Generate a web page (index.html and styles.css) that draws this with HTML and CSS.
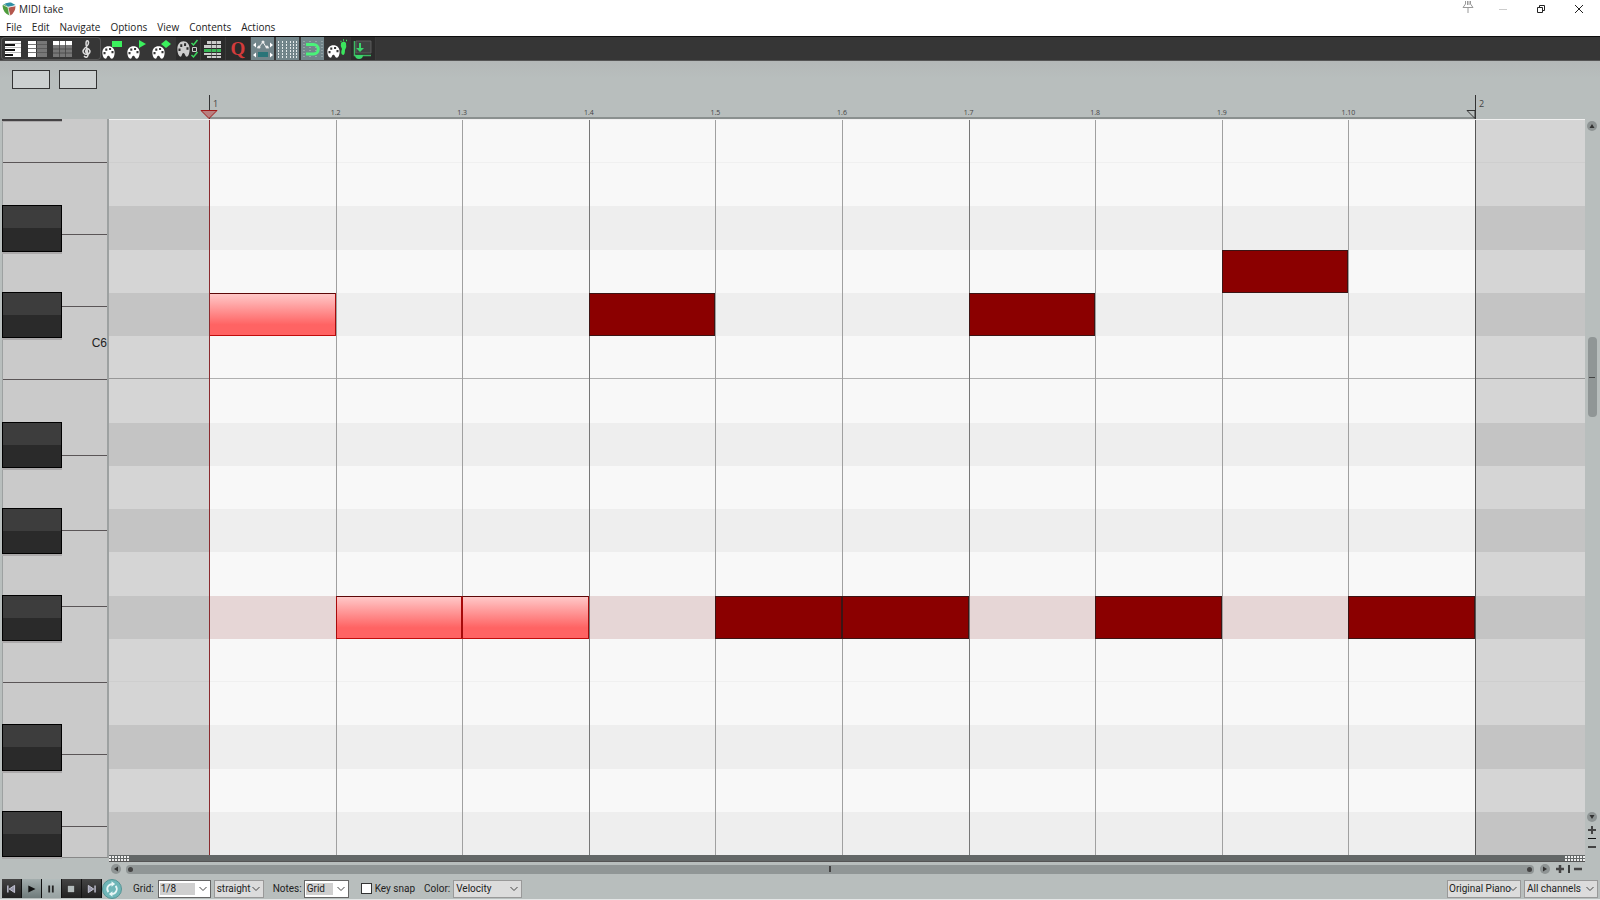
FILE: index.html
```html
<!DOCTYPE html>
<html lang="en">
<head>
<meta charset="utf-8">
<title>MIDI take</title>
<link rel="stylesheet" href="styles.css">
</head>
<body>
<svg class="defs" aria-hidden="true">
  <symbol id="palette" viewBox="0 0 14 13" preserveAspectRatio="none"><path fill-rule="evenodd" d="M7 .3C3 .3 .4 3 .4 6.500C.4 10 2 12.700 4 12.700C5.500 12.700 5 10 6.800 9.800C8.800 9.700 8.500 12.700 10.500 12.700C12.500 12.700 13.600 9.500 13.600 6.500C13.600 3 11 .3 7 .3ZM1.600 6h2.200v2.200H1.600ZM3.500 2.600h2.200v2.200H3.500ZM7.600 1.900h2.200v2.200H7.600ZM10.200 5h2.200v2.200h-2.200Z"/></symbol>
  <symbol id="chev" viewBox="0 0 8 6"><path d="M0.500 1l3.500 3.500L7.500 1" fill="none" stroke="#444" stroke-width="1"/></symbol>
</svg>
<div class="app">
  <header class="titlebar">
    <svg class="logo" viewBox="0 0 14 14"><path d="M0.500 3.500Q2 2 4 3l3 3 .5 7.500Q1 11 .5 3.500z" fill="#4d9b3c"/><path d="M1 3Q4 0 9 .6l4.500 2.400-4 1.500L6 5 3.500 2.500z" fill="#2f8fa3"/><path d="M6.500 5.500l7-1.500Q13.500 10 8.500 13.500L7 9z" fill="#b4574d"/><path d="M1.500 3.200l4.500 2 1.500 8M6 5.200l7.500-1.500" stroke="#eee" fill="none" stroke-width=".8"/></svg>
    <h1 class="title">MIDI take</h1>
    <div class="winbtns">
      <button class="winbtn pin" aria-label="Pin"><svg width="12" height="12" viewBox="0 0 12 12"><path d="M3.500 0v3L1 6.500h10L8.500 3V0M5.500 0v4M7 0v4M6 7v5" fill="none" stroke="#999"/></svg></button>
      <button class="winbtn" aria-label="Minimize"><svg width="10" height="10" viewBox="0 0 10 10"><path d="M1 5.500h8" stroke="#ccc"/></svg></button>
      <button class="winbtn" aria-label="Restore"><svg width="10" height="10" viewBox="0 0 10 10"><path d="M1.500 3.500h5v5h-5zM3.500 3V1.500h5v5H7" fill="none" stroke="#222"/></svg></button>
      <button class="winbtn" aria-label="Close"><svg width="10" height="10" viewBox="0 0 10 10"><path d="M1 1l8 8M9 1L1 9" stroke="#222"/></svg></button>
    </div>
  </header>
  <nav class="menu">
    <button>File</button><button>Edit</button><button>Navigate</button><button>Options</button><button>View</button><button>Contents</button><button>Actions</button>
  </nav>
  <div class="toolbar">
    <div class="toolgroup">
      <button class="tool" aria-label="Piano roll"><svg viewBox="0 0 24 24"><path d="M4 4h16v16H4z" fill="#fff"/><path d="M4 8h10M4 13h10M4 18h8" stroke="#111" stroke-width="2"/><path d="M4 6.500h16M4 10.500h16M4 15.500h16" stroke="#888" stroke-width=".6"/></svg></button>
      <button class="tool" aria-label="Named notes"><svg viewBox="0 0 24 24"><path d="M2 4h8v16H2z" fill="#fff"/><path d="M11 4h10v16H11z" fill="#777"/><path d="M2 7.500h19M2 11.500h19M2 15.500h19" stroke="#555" stroke-width=".8"/></svg></button>
      <button class="tool" aria-label="Event list"><svg viewBox="0 0 24 24"><path d="M2 8h19v12H2z" fill="#777"/><path d="M2 4h19v4H2z" fill="#fff"/><path d="M8.500 4v16M14.500 4v16M2 12h19M2 16h19" stroke="#444" stroke-width=".8"/></svg></button>
      <button class="tool" aria-label="Notation"><svg viewBox="0 0 24 24"><path d="M8 19q3 3 4-1L10 7q0-4 2-3 2 3-3 7-4 4 0 6 5 1 5-3-2-4-4-1-1 2 1 3" fill="none" stroke="#ddd" stroke-width="1.500"/></svg></button>
    </div>
    <button class="tool" aria-label="Color by velocity"><svg viewBox="0 0 24 24"><use href="#palette" x="1" y="9" width="13" height="13" fill="#fff"/><path d="M11 4h10v6H11z" fill="#3bf05d"/></svg></button>
    <button class="tool" aria-label="Color by channel"><svg viewBox="0 0 24 24"><use href="#palette" x="1" y="9" width="13" height="13" fill="#fff"/><path d="M13 3l7 4-7 4z" fill="#3bf05d"/></svg></button>
    <button class="tool" aria-label="Color by pitch"><svg viewBox="0 0 24 24"><use href="#palette" x="1" y="9" width="13" height="13" fill="#fff"/><path d="M10 7l5-4 5 4-5 4z" fill="#3bf05d"/></svg></button>
    <button class="tool dark" aria-label="Color options"><svg viewBox="0 0 24 24"><use href="#palette" x="1" y="4" width="13" height="16" fill="#ccc"/><path d="M16.500 10.500h4v4h-4z" stroke="#ccc" fill="none"/><path d="M15.500 6l2 2 4-5M15.500 18l2 2 4-5" stroke="#3bd65d" fill="none" stroke-width="1.500"/></svg></button>
    <button class="tool dark" aria-label="Note rows"><svg viewBox="0 0 24 24"><path d="M6 4h14v3H6zM3 8h17v3H3zM3 16h17v2H3zM6 19h14v2H6z" fill="#ccc"/><path d="M3 12h17v3H3z" fill="#39b957"/><path d="M10.500 4v17M15.500 4v17" stroke="#444" stroke-width=".7"/></svg></button>
    <button class="tool dark quant" aria-label="Quantize">Q</button>
    <button class="tool on" aria-label="Envelope"><svg viewBox="0 0 24 24"><path d="M6 11l2-1 4-5 3 5 3 1" stroke="#eee" fill="none"/><path d="M2 8l3-2.500v5zM22 8l-3-2.500v5zM2 18l3-2.500v5zM22 18l-3-2.500v5z" fill="#fff"/><circle cx="12" cy="5" r="1.500" fill="#eee"/><circle cx="8" cy="10" r="1.500" fill="#eee"/><circle cx="16" cy="10" r="1.500" fill="#eee"/><path d="M7 15h10v5H7z" fill="#2a7478"/></svg></button>
    <button class="tool on" aria-label="Grid"><svg viewBox="0 0 24 24"><path d="M2.500 4v17M6.500 4v17M10.500 4v17M14.500 4v17M17.500 4v17M20.500 4v17" stroke="#e4eaea" stroke-dasharray="2 1"/></svg></button>
    <button class="tool on" aria-label="Snap"><svg viewBox="0 0 24 24"><path d="M3 4v17M9 4v17M15 4v17M21 4v17" stroke="#b8c4c4" stroke-dasharray="1 2"/><path d="M5 7.500h7.500a4.500 4.500 0 0 1 0 9.500H5" stroke="#4bf27a" stroke-width="3" fill="none"/></svg></button>
    <button class="tool" aria-label="Step input"><svg viewBox="0 0 24 24"><use href="#palette" x="1" y="8" width="13" height="13" fill="#fff"/><path d="M15 6q3-3 5 0 1 4-1 7 0 5-2 5-3-1-1-6-2-3-1-6z" fill="#3be65d"/><path d="M14.500 4.500h1M17 3h1M20 3.500h1" stroke="#3be65d" stroke-width="1.500"/></svg></button>
    <button class="tool dark" aria-label="Dock"><svg viewBox="0 0 24 24"><path d="M5 4h15v12H5z" fill="#3f4242" stroke="#666" stroke-width=".8"/><path d="M3.500 4v14.500H20" stroke="#3db963" fill="none" stroke-width="1.500"/><path d="M4 18h8q0 4-4 4t-4-4zM8 6h2v5h3l-4 4-4-4h3z" fill="#3bd66a"/></svg></button>
  </div>
  <div class="head">
    <div class="boxes"><input class="box" aria-label="Note"><input class="box" aria-label="Value"></div>
    <div class="ruler">
      <div class="tick first"><svg class="marker" viewBox="0 0 18 9"><path d="M1 .5h16L9 8.500z" fill="#b97f7f" stroke="#a01818"/></svg><span>1</span></div>
      <div class="tick"><span>1.2</span></div><div class="tick"><span>1.3</span></div><div class="tick"><span>1.4</span></div><div class="tick"><span>1.5</span></div><div class="tick"><span>1.6</span></div><div class="tick"><span>1.7</span></div><div class="tick"><span>1.8</span></div><div class="tick"><span>1.9</span></div><div class="tick"><span>1.10</span></div>
      <div class="tick last"><svg class="marker" viewBox="0 0 18 9"><path d="M1 .5h8v8z" fill="none" stroke="#333"/></svg><span>2</span></div>
    </div>
  </div>
  <main class="editor">
    <div class="piano">
      <div class="whites"><i class="w1"></i><i class="w2"></i><i class="w2"></i><i class="w2 c6">C6</i><i class="w3"></i><i class="w3"></i><i class="w3"></i><i class="w3"></i><i class="w2"></i><i class="w2"></i><i class="w4"></i></div>
      <div class="blacks"><b class="r0"></b><b class="r3"></b><b class="r5"></b><b class="r8"></b><b class="r10"></b><b class="r12"></b><b class="r15"></b><b class="r17"></b></div>
    </div>
    <div class="roll">
      <i class="band r1 faint"></i><i class="band dk r3"></i><i class="band dk r5"></i><i class="band r6 octave"></i><i class="band dk r8"></i><i class="band dk r10"></i><i class="band dk r12"></i><i class="band r13 faint"></i><i class="band dk r15"></i><i class="band dk r17"></i>
      <i class="active r12"></i>
      <i class="line c3"></i><i class="line c4"></i><i class="line c5 strong"></i><i class="line c6l"></i><i class="line c7"></i><i class="line c8 strong"></i><i class="line c9"></i><i class="line c10"></i><i class="line c11"></i>
      <i class="shade left"></i><i class="shade right"></i>
      <i class="note sel r5 c2"></i><i class="note sel r12 c3"></i><i class="note sel r12 c4"></i>
      <i class="note r5 c5"></i><i class="note r12 c6l"></i><i class="note r12 c7"></i><i class="note r5 c8"></i><i class="note r12 c9"></i><i class="note r4 c10"></i><i class="note r12 c11"></i>
      <i class="line c2 cursor"></i><i class="line c12 end"></i>
    </div>
    <div class="vscroll">
      <button class="round" aria-label="Scroll up"><svg viewBox="0 0 10 10"><path d="M5 3l2.500 4h-5z"/></svg></button>
      <div class="vtrack"><div class="vthumb"></div></div>
      <button class="round" aria-label="Scroll down"><svg viewBox="0 0 10 10"><path d="M5 7l2.500-4h-5z"/></svg></button>
      <svg class="vzoom" viewBox="0 0 10 26"><path d="M1 8h8M5 4v8M1 25h8" stroke="#444" stroke-width="2"/><path d="M1 16.500h8" stroke="#111" stroke-width="1"/></svg>
    </div>
  </main>
  <div class="divider"><i class="grip"></i><i class="grip"></i></div>
  <div class="hscroll">
    <button class="round" aria-label="Scroll left"><svg viewBox="0 0 10 10"><path d="M3 5l4-2.500v5z"/></svg></button>
    <div class="htrack"><i class="dot"></i><i class="mid"></i><i class="dot"></i></div>
    <button class="round" aria-label="Scroll right"><svg viewBox="0 0 10 10"><path d="M7 5L3 2.500v5z"/></svg></button>
    <svg class="hzoom" viewBox="0 0 26 10"><path d="M0 5h8M4 1v8M18 5h8" stroke="#444" stroke-width="2.500"/><path d="M13 1v8" stroke="#111" stroke-width="1.500"/></svg>
  </div>
  <footer class="bottom">
    <div class="transport">
      <button aria-label="Start"><svg viewBox="0 0 20 20"><path d="M6.500 6v8" stroke="#ccd" stroke-width="1.500"/><path d="M14 6v8l-6-4z" fill="#99a" stroke="#ccd"/></svg></button>
      <button class="lit" aria-label="Play"><svg viewBox="0 0 20 20"><path d="M7 6v8l8-4z" fill="#111"/></svg></button>
      <button class="lit pause" aria-label="Pause"><svg viewBox="0 0 20 20"><path d="M8 6v8M12 6v8" stroke="#222" stroke-width="2"/></svg></button>
      <button aria-label="Stop"><svg viewBox="0 0 20 20"><path d="M6.500 6.500h7v7h-7z" fill="#b4bcbc"/></svg></button>
      <button aria-label="End"><svg viewBox="0 0 20 20"><path d="M14.500 6v8" stroke="#ccd" stroke-width="1.500"/><path d="M7 6v8l6-4z" fill="#99a" stroke="#ccd"/></svg></button>
      <button class="loop" aria-label="Repeat"><svg viewBox="0 0 20 20"><path d="M6 13.500a5.500 5.500 0 0 1 4-9M14 6.500a5.500 5.500 0 0 1-4 9" fill="none" stroke="#e8f6f6" stroke-width="2"/><path d="M9.500 1.500l4 3-4 3zM10.500 12.500l-4 3 4 3z" fill="#e8f6f6"/></svg></button>
    </div>
    <label for="grid">Grid:</label>
    <span class="combo w-grid edit"><select id="grid"><option>1/8</option></select><svg><use href="#chev"/></svg></span>
    <span class="combo w-str"><select aria-label="Grid type"><option>straight</option></select><svg><use href="#chev"/></svg></span>
    <label for="notes" class="gap-notes">Notes:</label>
    <span class="combo w-notes edit"><select id="notes"><option>Grid</option></select><svg><use href="#chev"/></svg></span>
    <input type="checkbox" id="snap" class="check"><label for="snap">Key snap</label>
    <label for="color" class="gap-color">Color:</label>
    <span class="combo w-color"><select id="color"><option>Velocity</option></select><svg><use href="#chev"/></svg></span>
    <span class="combo w-inst"><select aria-label="Instrument"><option>Original Piano</option></select><svg><use href="#chev"/></svg></span>
    <span class="combo w-chan"><select aria-label="Channel"><option>All channels</option></select><svg><use href="#chev"/></svg></span>
  </footer>
</div>
</body>
</html>
```
FILE: styles.css
```css
* { box-sizing: border-box; }
body { margin: 0; font-family: "Open Sans", sans-serif; font-size: 10px; color: #222; background: #b8bebd; }
button { padding: 0; border: 0; background: none; font: inherit; color: inherit; }
svg { display: block; }
.defs { display: none; }
.app { display: flex; flex-direction: column; height: 100vh; border-bottom: 1px solid #e4e6e6; }

.titlebar { display: flex; align-items: center; height: 18px; padding: 0 16px 0 2px; background: #fff; }
.logo { width: 14px; height: 14px; margin-right: 3px; }
.title { margin: 0; font-size: 10px; font-weight: 400; }
.winbtns { display: flex; gap: 28px; margin-left: auto; align-items: center; }
.winbtn { width: 10px; }
.pin { width: 12px; align-self: flex-start; margin-right: -4px; margin-top: -3px; }

.menu { display: flex; gap: 10px; height: 18px; padding: 0 6px; background: #fff; }
.menu button { line-height: 18px; }

.toolbar { display: flex; height: 25px; padding-left: 1px; background: #363636; border-top: 1px solid #0c0c0c; border-bottom: 1px solid #555; flex: none; }
.toolgroup { display: flex; border-radius: 4px; box-shadow: inset 0 0 0 1px #555; }
.tool { width: 25px; height: 23px; }
.tool svg { width: 24px; height: 24px; }
.tool.dark { background: #2b2b2b; border-right: 1px solid #3a3a3a; }
.tool.on { background: #72858a; border-right: 2px solid #363636; }
.toolbar .quant { font: 19px/22px "Liberation Serif", serif; font-weight: 700; color: #d33b3b; }

.head { height: 58px; flex: none; display: grid; grid-template-rows: 34px 24px; background: linear-gradient(#b4b8b8, #b8bebd 30%); }
.boxes { display: flex; gap: 9px; padding: 9px 12px; }
.box { width: 38px; height: 19px; border: 1px solid #333; background: #ccd0d0; padding: 0 2px; }
.ruler { display: grid; grid-template-columns: repeat(10, 1fr) 0; margin: 0 125px 0 209px; border-bottom: 2px solid #8a908f; }
.tick { display: flex; align-items: flex-end; padding-bottom: 1px; font-size: 7px; line-height: 10px; color: #444; }
.tick span { width: 16px; margin-left: -8px; flex: none; text-align: center; white-space: nowrap; }
.first, .last { position: relative; height: 24px; border-left: 1px solid #333; font-size: 9px; align-items: flex-start; padding: 4px 0 0; }
.first span, .last span { width: auto; margin-left: 3px; }
.marker { position: absolute; width: 18px; height: 9px; left: -10px; bottom: 0; }

.editor { flex: 1; min-height: 0; display: flex; }
.piano { width: 107px; margin-left: 2px; display: grid; background: #cacaca; border-left: 1px solid #9da1a1; border-right: 2px solid #9da1a1; margin-bottom: -3px; border-bottom: 1px solid #888; }
.whites, .blacks { grid-area: 1 / 1; min-height: 0; }
.whites { display: flex; flex-direction: column; padding-top: 1px; }
.whites i { flex: 1 1 0; border-bottom: 1px solid #5a5557; font-style: normal; }
.whites .w1 { flex-grow: 43; }
.whites .w2 { flex-grow: 72; }
.whites .w3 { flex-grow: 76; }
.whites .w4 { flex-grow: 31; border: 0; }
.whites .c6 { display: flex; align-items: center; justify-content: flex-end; font: 12px "Liberation Sans", sans-serif; padding: 1px 0 0; }
.blacks { display: grid; grid-template-rows: repeat(17, 1fr); width: 60px; margin-left: -1px; padding: 1px 0 2px; }
.blacks b { margin: -1px 0 -2px; background: linear-gradient(#3d3d3d 50%, #2a2a2a 50%); border: 1px solid #000; box-shadow: 0 2px 0 #aba9aa; }
.blacks .r0 { grid-row: 1; height: 2px; margin: -1px 0 0; border: 0; background: #454345; box-shadow: 0 1px 0 #aba9aa; }

.roll { flex: 1; display: grid; grid-template-rows: repeat(17, 1fr); grid-template-columns: 100px repeat(10, 1fr) 110px; background: #f8f8f8; border-top: 1px solid #f0f0f0; }
.band { grid-column: 1 / -1; }
.dk { background: linear-gradient(90deg, #e5e5e5 100px, #eee 100px calc(100% - 110px), #e5e5e5 0); }
.faint { border-bottom: 1px solid #f0f0f0; }
.octave { border-bottom: 1px solid #b0b0b0; }
.active { grid-column: 2 / 12; background: #e6d6d6; }
.line { grid-row: 1 / -1; border-left: 1px solid #a0a0a0; }
.strong { border-color: #777; }
.cursor { border-color: #8a2a2e; }
.end { border-color: #666; }
.shade { grid-row: 1 / -1; background: #000; opacity: .14; }
.left { grid-column: 1; }
.right { grid-column: 12; }
.note { background: #8b0000; border: 1px solid #3c1414; }
.sel { background: linear-gradient(#ffc8c8, #ff6363 75%); border-color: #5c0808 #a80a0a #c00c0c; }
.r1 { grid-row: 1; } .r3 { grid-row: 3; } .r4 { grid-row: 4; } .r5 { grid-row: 5; } .r6 { grid-row: 6; }
.r8 { grid-row: 8; } .r10 { grid-row: 10; } .r12 { grid-row: 12; } .r13 { grid-row: 13; } .r15 { grid-row: 15; } .r17 { grid-row: 17; }
.c2 { grid-column: 2; } .c3 { grid-column: 3; } .c4 { grid-column: 4; } .c5 { grid-column: 5; } .c6l { grid-column: 6; } .c7 { grid-column: 7; }
.c8 { grid-column: 8; } .c9 { grid-column: 9; } .c10 { grid-column: 10; } .c11 { grid-column: 11; } .c12 { grid-column: 12; }

.vscroll { width: 15px; display: flex; flex-direction: column; align-items: center; padding: 2px 2px 0 1px; }
.round { width: 10px; height: 10px; border-radius: 50%; background: #8e9494; flex: none; }
.round svg { width: 10px; height: 10px; fill: #333; }
.vtrack { flex: 1; width: 9px; display: flex; flex-direction: column; }
.vtrack::before { content: ""; flex: 205; }
.vtrack::after { content: ""; flex: 393; }
.vthumb { flex: 80; border-radius: 4px; background: linear-gradient(#444, #444) center / 6px 1px no-repeat, #909696; }
.vzoom { width: 10px; height: 26px; margin-bottom: 7px; }

.divider { height: 7px; flex: none; margin: 0 15px 0 109px; display: flex; justify-content: space-between; align-items: center; background: #636767; border-bottom: 1px solid #555; }
.grip { width: 20px; height: 5px; background: repeating-linear-gradient(90deg, transparent 0 2px, #636767 2px 3px), linear-gradient(#eee 0 2px, #636767 2px 3px, #eee 3px); }

.hscroll { display: flex; align-items: center; height: 16px; flex: none; padding: 0 18px 2px 111px; gap: 5px; }
.htrack { flex: 1; height: 9px; display: flex; align-items: center; justify-content: space-between; padding: 0 2px; border-radius: 4px; background: #909696; }
.hscroll > .round:last-of-type { margin: 0 1px; }
.dot { width: 5px; height: 5px; border-radius: 50%; background: #444; }
.mid { width: 2px; height: 6px; background: #444; }
.hzoom { width: 26px; height: 10px; }

.bottom { display: flex; align-items: center; height: 21px; flex: none; padding: 0 2px; font-family: Roboto, sans-serif; }
.transport { display: flex; margin-right: 11px; align-items: center; }
.transport button { width: 20px; height: 19px; background: linear-gradient(#444, #222); border-right: 1px solid #111; }
.transport svg { width: 18px; height: 18px; }
.transport .lit { background: linear-gradient(#a3adad, #6f7b7b); }
.transport .pause { background: linear-gradient(#b4bdbd, #98a2a2); }
.transport .loop { width: 20px; height: 20px; border: 1px solid #559595; border-radius: 50%; background: #6fb6b8; }
.combo { display: grid; height: 18px; border: 1px solid #999; background: #dcdcdc; margin-right: 3px; }
.combo select { grid-area: 1 / 1; width: 100%; appearance: none; border: 0; padding: 0 2px; margin: 0; background: none; font: inherit; color: inherit; }
.combo svg { grid-area: 1 / 1; justify-self: end; align-self: center; width: 8px; height: 6px; margin-right: 3px; pointer-events: none; }
.edit { background: #fff; border-color: #666; padding: 2px 0 2px 1px; }
.edit select { background: linear-gradient(#cfcfcf, #cfcfcf) 0 0 / calc(100% - 15px) 100% no-repeat; padding: 0 1px; }
.w-grid { width: 53px; margin-left: 4px; }
.w-str { width: 50px; }
.gap-notes { margin: 0 2px 0 6px; }
.w-notes { width: 45px; }
.check { appearance: none; width: 11px; height: 11px; margin: 0 3px 0 9px; border: 1px solid #333; background: #fff; }
.gap-color { margin: 0 3px 0 9px; }
.w-color { width: 69px; }
.w-inst { width: 74px; margin-left: auto; }
.w-inst select { padding: 0 1px; }
.w-chan { width: 74px; margin-right: 0; }
```
